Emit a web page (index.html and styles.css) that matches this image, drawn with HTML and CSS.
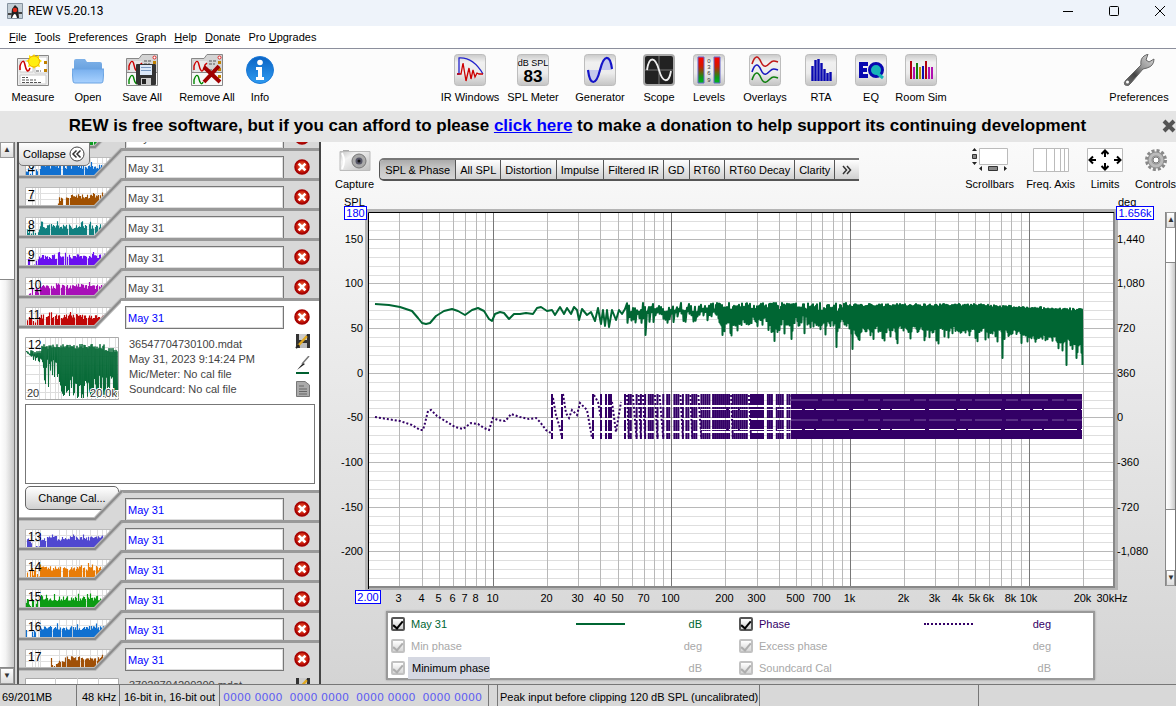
FILE: index.html
```html
<!DOCTYPE html>
<html lang="en">
<head>
<meta charset="utf-8">
<title>REW V5.20.13</title>
<link rel="stylesheet" href="styles.css">
</head>
<body>
<svg class="defs" width="0" height="0" aria-hidden="true">
  <defs>
    <linearGradient id="tile" x1="0" y1="0" x2="0" y2="1"><stop offset="0" stop-color="#c9c9c9"/><stop offset=".25" stop-color="#f0f0f0"/><stop offset=".6" stop-color="#ececec"/><stop offset="1" stop-color="#c4c4c4"/></linearGradient>
    <linearGradient id="folderBack" x1="0" y1="0" x2="0" y2="1"><stop offset="0" stop-color="#7fb2e8"/><stop offset="1" stop-color="#4f8fd6"/></linearGradient>
    <linearGradient id="folderFront" x1="0" y1="0" x2="0" y2="1"><stop offset="0" stop-color="#79b0ee"/><stop offset="1" stop-color="#a9d2ff"/></linearGradient>
    <linearGradient id="infoBlue" x1="0" y1="0" x2="0" y2="1"><stop offset="0" stop-color="#0a63c4"/><stop offset="1" stop-color="#2f9bf0"/></linearGradient>
    <linearGradient id="meter" x1="0" y1="0" x2="0" y2="1"><stop offset="0" stop-color="#f00"/><stop offset=".35" stop-color="#d21a00"/><stop offset=".8" stop-color="#0a9a1a"/><stop offset="1" stop-color="#00b820"/></linearGradient>
    <radialGradient id="redBall" cx=".5" cy=".45" r=".55"><stop offset="0" stop-color="#f08050"/><stop offset=".7" stop-color="#c81808"/><stop offset="1" stop-color="#a00000"/></radialGradient>
    <linearGradient id="steel" x1="0" y1="1" x2="1" y2="0"><stop offset="0" stop-color="#777"/><stop offset=".35" stop-color="#444"/><stop offset=".6" stop-color="#999"/><stop offset="1" stop-color="#ddd"/></linearGradient>
    <linearGradient id="cam" x1="0" y1="0" x2="1" y2="1"><stop offset="0" stop-color="#c4c4c4"/><stop offset=".3" stop-color="#f2f2f2"/><stop offset="1" stop-color="#c0c0c0"/></linearGradient>
    <symbol id="doc" viewBox="0 0 32 32">
      <path d="M.500 4.500H13L16 .500H31.500V31.500H.500V4.500Z" fill="#d4d4d4" stroke="#888"/>
      <path d="M3 7h13v11H3z" fill="#e8e8e8"/><path d="M3 16V12C5 6 7 6 8 11S11 20 13 14L14 11 16 9" fill="none" stroke="#c00" stroke-width="1.400"/>
      <path d="M18 7h8M18 10h6M18 16h5" stroke="#555" stroke-dasharray="3 1"/>
      <circle cx="28.500" cy="3.500" r="1.500" fill="#fff" stroke="#d22"/><path d="M27 7h3v3h-3zM27 14h3v3h-3z" fill="#c08000"/>
      <path d="M1 19h30v12H1z" fill="#f8f8f8"/><path d="M0 18.500h32" stroke="#888"/><path d="M3 30v-4c2-6 4-6 5-1s3 6 4 3" fill="none" stroke="#080" stroke-width="1.400"/>
      <path d="M27 21h3v3h-3z" fill="#c08000"/>
    </symbol>
    <symbol id="disk" viewBox="0 0 20 21"><path d="M0 1q0-1 1-1h18q1 0 1 1v19q0 1-1 1H2l-2-2z" fill="#333"/><path d="M4 1h12v10H4z" fill="#dbe8f8"/><path d="M5 3.500h10M5 6.500h10" stroke="#7898c0"/><path d="M5 14h10v7H5z" fill="#ccc"/><path d="M6 15h4v5H6z" fill="#222"/></symbol>
    <symbol id="smalldisk" viewBox="0 0 16 15"><path d="M1 0h14v14H3l-2-2z" fill="#333"/><path d="M4 0h8v6H4z" fill="#ccc"/><path d="M5 9h7v5H5z" fill="#bbb"/><path d="M3 12L12 2" stroke="#e0a820" stroke-width="2.500"/><path d="M1 14l3-3M12 2l1-1" stroke="#222" stroke-width="2"/></symbol>
    <symbol id="cross" viewBox="0 0 16 16"><circle cx="8" cy="8" r="7" fill="url(#redBall)" stroke="#a40000" stroke-width="1.500"/><path d="M5.500 5.500l5 5M10.500 5.500l-5 5" stroke="#fff" stroke-width="2.600" stroke-linecap="square"/></symbol>
  </defs>
</svg>

<header class="titlebar">
  <svg width="16" height="16" viewBox="0 0 16 16"><path d="M.500.500h15v15H.500z" fill="#c4ced6" stroke="#8693a0"/><path d="M4 15L5 6l3-4 3 3 1 10z" fill="#222"/><path d="M5 15q3-8 5 0z" fill="#fff"/><circle cx="8" cy="7" r="2.300" fill="#e02818"/><path d="M1 11h4M11 10h4" stroke="#444" stroke-width="2"/></svg>
  <h1>REW V5.20.13</h1>
  <div class="window-buttons">
    <button aria-label="Minimize"><svg width="12" height="12"><path d="M1 6.500h10" stroke="#000"/></svg></button>
    <button aria-label="Maximize"><svg width="12" height="12"><rect x="1.500" y="1.500" width="9" height="9" rx="1" fill="none" stroke="#000"/></svg></button>
    <button aria-label="Close"><svg width="12" height="12"><path d="M1 1l10 10M11 1L1 11" stroke="#000"/></svg></button>
  </div>
</header>
<nav class="menubar">
  <button><u>F</u>ile</button><button><u>T</u>ools</button><button><u>P</u>references</button><button><u>G</u>raph</button><button><u>H</u>elp</button><button><u>D</u>onate</button><button>Pro <u>U</u>pgrades</button>
</nav>
<div class="toolbar">
  <div class="tools file-tools">
    <button><svg width="32" height="32"><path d="M.500 4.500H13L16 1.500H31.500V31.500H.500Z" fill="#eee" stroke="#888"/><path d="M3 7h13v11H3zM18 3h12v16H18zM3 21h26v9H3z" fill="#fff" stroke="#ccc"/><path d="M3 16V12C5 6 7 6 8 11S11 20 13 14" fill="none" stroke="#c00" stroke-width="1.500"/><path d="M5 23.500h6M5 26h14M5 28.500h19M19 17h5" stroke="#555" stroke-dasharray="3 1"/><path d="M27 7h3v3h-3zM27 15h3v3h-3z" fill="#c08000"/><path d="M17 0l2 3 3-2 0 4 3 2-3 2 1 4-4-1-2 3-2-3-4 1 1-4-3-2 3-2 0-4 3 2z" fill="#ffe400"/><circle cx="17" cy="7.500" r="5.500" fill="#ffee10" stroke="#f0b000"/></svg>Measure</button>
    <button><svg width="32" height="32"><path d="M2 28V7q0-2 2-2h9l2 3h13q2 0 2 2v18z" fill="url(#folderBack)"/><path d="M0 15h32l-1 12q0 2-2 2H3q-2 0-2-2z" fill="url(#folderFront)" stroke="#6aa3e2"/></svg>Open</button>
    <button><svg width="32" height="32"><use href="#doc" width="32" height="32"/><use href="#disk" x="10" y="10" width="20" height="21"/></svg>Save All</button>
    <button><svg width="32" height="32"><use href="#doc" width="32" height="32"/><path d="M13 13l16 15M28 12L13 28" stroke="#a00000" stroke-width="4"/></svg>Remove All</button>
    <button><svg width="32" height="32"><circle cx="16" cy="16" r="13.500" fill="url(#infoBlue)" stroke="#1c7ad8"/><circle cx="16" cy="8.500" r="2.800" fill="#fff"/><path d="M12 13h6v10h2v3h-8v-3h2v-7h-2z" fill="#fff"/></svg>Info</button>
  </div>
  <div class="tools view-tools">
    <button><svg width="32" height="32"><rect class="tile" x=".500" y=".500" width="31" height="31" rx="3"/><path d="M3 20h2V4q14-1 24 16" fill="none" stroke="#22c" stroke-width="1.300"/><path d="M3 20h4l2-11 3 18 3-13 2 11 2-9 2 7 2-4 2 1h4" fill="none" stroke="#c00" stroke-width="1.300"/></svg>IR Windows</button>
    <button><svg width="32" height="32"><rect class="tile" x=".500" y=".500" width="31" height="31" rx="3"/><text x="16" y="12" class="ic-label">dB SPL</text><text x="16" y="28" class="ic-number">83</text></svg>SPL Meter</button>
    <button><svg width="32" height="32"><rect class="tile" x=".500" y=".500" width="31" height="31" rx="3"/><path d="M4 16H28Q26 4 22 4 19 5 16 16 13 28 10 28 6 27 4 16" fill="#c4c8ec"/><path d="M4 16C6 32 12 32 16 16S26 0 28 15" fill="none" stroke="#1414c8" stroke-width="2.200"/></svg>Generator</button>
    <button><svg width="32" height="32"><rect x="1" y="1" width="30" height="30" rx="3" fill="#222" stroke="#aaa" stroke-width="2"/><path d="M2 16h28M16 2v28" stroke="#777"/><path d="M4 16C6 2 12 2 16 16S26 29 28 17" fill="none" stroke="#eee" stroke-width="1.800"/></svg>Scope</button>
    <button><svg width="32" height="32"><rect class="tile" x=".500" y=".500" width="31" height="31" rx="3"/><path d="M5 3h6v26H5zM21 3h6v26h-6z" fill="url(#meter)" stroke="#66c"/><g class="ic-scale"><text x="16" y="9">0</text><text x="16" y="15">3</text><text x="16" y="21">6</text><text x="16" y="28">9</text></g></svg>Levels</button>
    <button><svg width="32" height="32"><rect class="tile" x=".500" y=".500" width="31" height="31" rx="3"/><g fill="none" stroke-width="1.600"><path d="M3 10C6 1 9 1 12 8S18 12 21 9 26 7 29 8" stroke="#c01818"/><path d="M3 18C6 9 9 9 12 16S18 20 21 17 26 15 29 16" stroke="#1818c0"/><path d="M3 26C6 17 9 17 12 24S18 28 21 25 26 23 29 24" stroke="#108010"/></g></svg>Overlays</button>
    <button><svg width="32" height="32"><rect class="tile" x=".500" y=".500" width="31" height="31" rx="3"/><path d="M7.500 27V12M10.500 27V6M13.500 27V5M16.500 27V9M19.500 27V15M22.500 27V19M25.500 27V18" stroke="#0808b0" stroke-width="2.400"/></svg>RTA</button>
    <button><svg width="32" height="32"><rect class="tile" x=".500" y=".500" width="31" height="31" rx="3"/><path d="M4 8h9v4H8v2h4v4H8v2h5v4H4z" fill="#0808b0"/><circle cx="21" cy="16" r="6.500" fill="#18b4b8" stroke="#0808b0" stroke-width="3"/><path d="M22 19l6 5" stroke="#18b4b8" stroke-width="3"/></svg>EQ</button>
    <button><svg width="32" height="32"><rect class="tile" x=".500" y=".500" width="31" height="31" rx="3"/><g stroke-width="2"><path d="M6 25V7M21 25V7" stroke="#b00010"/><path d="M9 25V13M24 25V13M27 25V13" stroke="#b010b0"/><path d="M12 25V9" stroke="#108010"/><path d="M15 25V13" stroke="#c09000"/><path d="M18 25V12" stroke="#1010b0"/></g></svg>Room Sim</button>
  </div>
  <div class="tools pref-tools">
    <button><svg width="32" height="32"><path d="M3 26L18 11Q17 5 21 2L25 0 23 6 26 8 31 5Q31 12 24 14L20 15 8 29Q6 33 2 31 0 29 3 26Z" fill="url(#steel)" stroke="#666"/><circle cx="4.500" cy="28" r="1.500" fill="#fff"/></svg>Preferences</button>
  </div>
</div>
<div class="donate">
  <p>REW is free software, but if you can afford to please <a href="#donate">click here</a> to make a donation to help support its continuing development</p>
  <button aria-label="Dismiss"><svg width="14" height="14"><path d="M2 2l10 10M12 2L2 12" stroke="#555" stroke-width="4"/></svg></button>
</div>

<main class="main">
  <div class="scroll scroll-left"><button aria-label="Scroll up">▲</button><div class="gap"></div><div class="thumb"></div><button aria-label="Scroll down">▼</button></div>
  <aside class="measurements">
    <button class="collapse">Collapse <svg width="16" height="16"><circle cx="8" cy="8" r="7" fill="#fff" stroke="#444"/><path d="M7.500 4.500L4 8l3.500 3.500M11.500 4.500L8 8l3.500 3.500" fill="none" stroke="#333" stroke-width="1.500"/></svg></button>
    <div id="upper" class="rows"></div>
    <section class="detail">
      <div class="summary">
        <svg id="preview" width="94" height="64" role="img" aria-label="Measurement 12"></svg>
        <div class="facts"><p>36547704730100.mdat</p><p>May 31, 2023 9:14:24 PM</p><p>Mic/Meter: No cal file</p><p>Soundcard: No cal file</p></div>
        <div class="actions">
          <button aria-label="Save measurement"><svg width="16" height="15"><use href="#smalldisk"/></svg></button>
          <button aria-label="Trace colour"><svg width="16" height="18"><path d="M2 14L8 7l2 1z" fill="#222"/><path d="M7 8L14 0" stroke="#777" stroke-width="1.500"/><path d="M1 17h13" stroke="#006030" stroke-width="2"/></svg></button>
          <button aria-label="Notes"><svg width="16" height="16"><path d="M1.500.500H10L14.500 4v11.500h-13z" fill="#aaa" stroke="#777"/><path d="M4 5h5M4 8h8M4 10.500h8M4 13h8" stroke="#666"/></svg></button>
        </div>
      </div>
      <textarea aria-label="Notes"></textarea>
    </section>
    <div id="lower" class="rows"></div>
    <section class="next">
      <svg width="94" height="64"><path d="M.500.500h93v63H.500z" fill="#fff" stroke="#aaa"/><path d="M30.500 0v9M52.500 0v9M73.500 0v9" stroke="#ccc"/></svg>
      <p>37028704200200.mdat</p>
      <svg width="16" height="15"><use href="#smalldisk"/></svg>
    </section>
  </aside>

  <section class="graph">
    <div class="graph-bar">
      <button class="stack"><svg width="32" height="24"><path d="M4 2h6v3H4z" fill="#aaa"/><path d="M1 3.500h30v19H1z" fill="url(#cam)" stroke="#bbb"/><path d="M3 5q4 8 0 16" fill="none" stroke="#fff" stroke-width="2"/><circle cx="20" cy="13" r="7" fill="#aaa" stroke="#777"/><circle cx="20" cy="13" r="3.500" fill="#556"/><circle cx="20" cy="13" r="1.500" fill="#111"/></svg>Capture</button>
      <nav class="tabs"><button class="active">SPL &amp; Phase</button><button>All SPL</button><button>Distortion</button><button>Impulse</button><button>Filtered IR</button><button>GD</button><button>RT60</button><button>RT60 Decay</button><button>Clarity</button><button aria-label="More"><svg width="10" height="10"><path d="M1 1l3.500 4L1 9M5 1l3.500 4L5 9" fill="none" stroke="#333" stroke-width="1.500"/></svg></button></nav>
      <div class="graph-tools">
        <button class="stack"><svg width="38" height="24"><path d="M8.500.500h28v16h-28z" fill="#fff" stroke="#bbb"/><path d="M1 3l2.500-3L6 3zM1 14l2.500 3L6 14zM11 18v5l-3-2.500zM33 18v5l3-2.500z" fill="#222"/><path d="M1.500 6.500h4v4h-4zM17.500 18.500h9v4h-9z" fill="#888" stroke="#333"/></svg>Scrollbars</button>
        <button class="stack"><svg width="36" height="24"><path d="M.500.500h35v23H.500z" fill="#fff" stroke="#bbb"/><path d="M13.500 0v24M21.500 0v24M27.500 0v24M31.500 0v24" stroke="#bbb"/></svg>Freq. Axis</button>
        <button class="stack"><svg width="36" height="24"><path d="M.500.500h35v23H.500z" fill="#fff" stroke="#bbb"/><path d="M18 3v6M18 21v-6M3 12h6M33 12h-6M14.500 6L18 2.500 21.500 6M14.500 18l3.500 3.500 3.500-3.500M6 8.500L2.500 12 6 15.500M30 8.500l3.500 3.500-3.500 3.500" fill="none" stroke="#000" stroke-width="2"/></svg>Limits</button>
        <button class="stack"><svg width="24" height="24"><circle cx="12" cy="12" r="9.500" fill="none" stroke="#888" stroke-width="3" stroke-dasharray="3 2"/><circle cx="12" cy="12" r="6" fill="#ccc" stroke="#8c8c8c" stroke-width="5"/><circle cx="12" cy="12" r="6" fill="none" stroke="#bbb" stroke-width="3"/><circle cx="12" cy="12" r="3" fill="#fff" stroke="#777"/></svg>Controls</button>
      </div>
    </div>
    <div class="plot-row">
      <div class="plot" id="plot">
        <svg id="chart" role="img" aria-label="SPL and phase against frequency"></svg>
        <input class="limit spl-top" aria-label="SPL upper limit" value="180">
        <input class="limit deg-top" aria-label="Phase upper limit" value="1.656k">
        <input class="limit freq-low" aria-label="Lowest frequency" value="2.00">
      </div>
      <div class="scroll scroll-right"><button aria-label="Scroll up">▲</button><div class="gap"></div><div class="thumb"></div><div class="gap"></div><button aria-label="Scroll down">▼</button></div>
    </div>
    <div class="legend">
      <div class="key green"><input type="checkbox" id="k1" checked><label for="k1">May 31</label><i></i><span>dB</span></div>
      <div class="key violet"><input type="checkbox" id="k2" checked><label for="k2">Phase</label><i></i><span>deg</span></div>
      <div class="key off"><input type="checkbox" id="k3" checked disabled><label for="k3">Min phase</label><span>deg</span></div>
      <div class="key off"><input type="checkbox" id="k4" checked disabled><label for="k4">Excess phase</label><span>deg</span></div>
      <div class="key off"><input type="checkbox" id="k5" checked disabled><label for="k5" class="hint">Minimum phase</label><span>dB</span></div>
      <div class="key off"><input type="checkbox" id="k6" checked disabled><label for="k6">Soundcard Cal</label><span>dB</span></div>
    </div>
  </section>
</main>
<footer class="status">
  <span class="memory">69/201MB</span><span class="rate">48 kHz</span><span class="bits">16-bit in, 16-bit out</span><span class="inputs">0000 0000&nbsp; 0000 0000&nbsp; 0000 0000&nbsp; 0000 0000</span><span class="spacer"></span><span class="peak">Peak input before clipping 120 dB SPL (uncalibrated)</span><span class="message"></span><span class="last"></span>
</footer>
<script src="app.js"></script>
</body>
</html>
```
FILE: styles.css
```css
* { box-sizing: border-box; }
body { margin: 0; height: 100vh; display: flex; flex-direction: column; overflow: hidden; font: 11px/14px "Liberation Sans", Arial, sans-serif; color: #000; background: #d6d6d6; }
button { font: inherit; color: inherit; border: 0; padding: 0; margin: 0; background: none; }
p, h1 { margin: 0; }
svg { display: block; flex: none; }
.defs { position: absolute; }

.titlebar { flex: none; height: 26px; display: flex; align-items: center; gap: 5px; padding: 0 10px 4px 7px; background: #eef3fa; }
.titlebar h1 { font: 12px/16px Roboto, sans-serif; }
.window-buttons { margin-left: auto; display: flex; gap: 34px; }
.menubar { flex: none; height: 23px; display: flex; align-items: center; gap: 8px; padding: 0 9px; background: #fff; border-bottom: 1px solid #8c8f9c; }
.toolbar { flex: none; height: 62px; display: flex; justify-content: space-between; background: #fcfcfc; }
.tools { display: grid; }
.tools button { display: flex; flex-direction: column; align-items: center; gap: 4px; padding-top: 5px; white-space: nowrap; }
.file-tools { grid-template-columns: 66px 44px 64px 66px 40px; padding-right: 4px; }
.view-tools { grid-template-columns: 60px 66px 68px 50px 50px 62px 50px 50px 50px; }
.pref-tools { grid-template-columns: 74px; }
.tile { fill: url(#tile); stroke: #bdbdbd; }
.ic-label { font-size: 9px; text-anchor: middle; }
.ic-number { font-size: 17px; font-weight: bold; text-anchor: middle; }
.ic-scale { font-size: 6px; text-anchor: middle; fill: #333; }
.donate { flex: none; height: 31px; display: flex; align-items: center; padding-bottom: 1px; background: #e5e5e5; }
.donate p { flex: 1; padding-right: 7px; text-align: center; font: bold 17px/20px "Liberation Sans", Arial, sans-serif; white-space: nowrap; }
.donate a { color: #00f; }

.main { flex: 1; min-height: 0; display: flex; background: #d6d6d6; }
.scroll { flex: none; display: flex; flex-direction: column; border-right: 1px solid #777; }
.scroll button { flex: none; height: 16px; font-size: 8px; line-height: 12px; color: #333; background: linear-gradient(#fff, #ddd); border: 1px solid #999; }
.scroll .gap { background: #fff; }
.scroll .thumb { flex: 1; background: linear-gradient(90deg, #fff, #f4f4f4 40%, #c8c8c8); border-top: 1px solid #888; border-bottom: 1px solid #888; }
.scroll-left { width: 15px; }
.scroll-left .gap { height: 121px; }
.scroll-right { width: 11px; margin: 16px 0 23px; border-left: 1px solid #888; }
.scroll-right button { overflow: hidden; }
.scroll-right .gap { height: 34px; }
.scroll-right .thumb + .gap { height: 60px; }

.measurements { position: relative; flex: none; width: 304px; margin-left: 2px; overflow: hidden; background: #d8d8d8; border-left: 2px solid #555; border-right: 2px solid #444; }
.collapse { position: absolute; z-index: 2; left: -1px; top: 0; width: 72px; height: 24px; display: flex; align-items: center; justify-content: space-between; padding: 0 4px; border: 1px solid #777; border-radius: 0 0 5px 5px; background: linear-gradient(#fff, #d8d8d8); }
.row { height: 30px; display: flex; }
#upper .row:first-child { margin-top: -24px; }
.row .edge { overflow: visible; width: 102px; height: 30px; }
.row .body { flex: 1; display: flex; align-items: flex-start; gap: 10px; padding: 5px 10px 0 4px; border-top: 3px solid #999; }
.row input { flex: none; width: 159px; height: 23px; padding: 1px 2px 0; border: 1px solid #777; box-shadow: inset 0 0 0 1px #ddd; font: inherit; color: #444; background: #fff; }
.row.new input { color: #00f; }
.row .body button { margin-top: 3px; }
.row.white .body { background: #fff; }
.num { font-size: 12px; }
.detail { height: 162px; padding: 9px 4px 0 6px; background: #fff; }
.summary { display: flex; height: 67px; }
.facts { flex: 1; padding-left: 10px; color: #444; line-height: 15px; }
.actions { display: flex; flex-direction: column; gap: 7px; margin-top: -3px; padding-right: 4px; }
.detail textarea { display: block; width: 100%; height: 80px; border: 1px solid #777; resize: none; }
.changer { flex: none; width: 102px; display: flex; align-items: flex-start; background: #fff; position: relative; }
.change { flex: none; width: 94px; margin: -4px 0 0 6px; height: 24px; border: 1px solid #666; border-radius: 5px; background: linear-gradient(#fff, #d0d0d0); }
.changer .edge { position: absolute; left: 0; top: 0; }
.next { display: flex; gap: 10px; padding: 8px 8px 0 6px; color: #444; }
.next p { flex: 1; }

.graph { flex: 1; min-width: 0; display: flex; flex-direction: column; background: linear-gradient(#fafafa, #f0f0f0 25%, #d4d4d4); }
.graph-bar { flex: none; height: 54px; display: flex; align-items: flex-start; padding: 6px 0 0 14px; }
.stack { display: flex; flex-direction: column; align-items: center; gap: 5px; white-space: nowrap; }
.tabs { display: flex; margin: 10px 0 0 5px; height: 23px; border-top: 2px solid #777; border-bottom: 2px solid #555; border-left: 1px solid #555; border-radius: 5px 0 0 5px; overflow: hidden; background: linear-gradient(#fff, #d0d0d0); }
.tabs button { padding: 0 4px; border-right: 1px solid #555; white-space: nowrap; }
.tabs .active { padding: 0 5px; background: linear-gradient(#aaa, #c4c4c4 40%, #d4d4d4); }
.tabs button:last-child { padding: 0 7px; border-right: 0; }
.graph-tools { margin-left: auto; display: flex; gap: 12px; }
.graph-tools .stack:nth-child(3) { width: 36px; }
.plot-row { flex: 1; min-height: 0; display: flex; }
.plot { position: relative; flex: 1; min-width: 0; overflow: hidden; }
#chart { position: absolute; left: 0; top: 0; width: 100%; height: 100%; font-size: 11px; }
.limit { position: absolute; height: 14px; padding: 0; border: 1px solid #00f; background: #fff; color: #00f; font: 11px/12px "Liberation Sans", Arial, sans-serif; text-align: center; }
.spl-top { left: 23px; top: 10px; width: 23px; }
.deg-top { right: 11px; top: 10px; width: 38px; }
.freq-low { left: 34px; bottom: 5px; width: 26px; }
.legend { flex: none; display: grid; grid-template-columns: 348px 1fr; grid-auto-rows: 22px; margin: 2px 81px 4px 65px; height: 69px; padding: 0 42px 0 3px; background: #fff; border: 2px solid #999; box-shadow: 0 0 2px #999; }
.key { display: flex; align-items: center; padding-right: 37px; }
.key:nth-child(even) { padding-right: 0; }
.key input { appearance: none; display: grid; place-items: center; flex: none; width: 14px; height: 14px; margin: 0; border: 2px solid #555; border-radius: 2px; background: linear-gradient(#fff, #ccc); }
.key input::before { content: ""; width: 4px; height: 8px; border: solid #000; border-width: 0 2px 2px 0; rotate: 40deg; }
.key label { flex: none; width: 171px; padding-left: 6px; }
.key i { width: 49px; height: 0; border-top: 2px solid; }
.key span { margin-left: auto; }
.green { color: #006633; }
.violet { color: #330066; }
.violet i { border-top-style: dotted; }
.off { color: #a8a8a8; }
.off input { border-color: #b4b4b4; opacity: .8; }
.off input::before { border-color: #999; }
.key .hint { width: 82px; height: 22px; margin-left: 3px; padding: 4px; background: #d5d8e2; color: #000; white-space: nowrap; }

.status { flex: none; height: 22px; display: flex; border-top: 1px solid #777; background: #d8d8d8; line-height: 25px; white-space: nowrap; }
.status span { border-right: 1px solid #777; padding-left: 5px; }
.status .memory { width: 77px; padding-left: 2px; }
.status .rate { width: 43px; }
.status .bits { width: 100px; padding-left: 4px; }
.status .inputs { width: 269px; padding-left: 3px; font: 11px/25px "DejaVu Sans", sans-serif; color: #5f5ff0; }
.status .spacer { width: 9px; }
.status .peak { width: 262px; padding-left: 2px; }
.status .message { width: 219px; }
.status .last { flex: 1; border: 0; }
```
FILE: app.js
```js
let seed = 7;
const rnd = () => (seed = (seed * 16807) % 2147483647) / 2147483647;
const pick = (a, b) => a + (b - a) * rnd();

const upper = [
  { n: '5', color: '#0a9a20', from: 0 }, { n: '6', color: '#1070d0', from: 0 },
  { n: '7', color: '#a05000', from: 30 }, { n: '8', color: '#108080', from: 0 },
  { n: '9', color: '#6a10f0', from: 0 }, { n: '10', color: '#a810b8', from: 0 },
  { n: '11', color: '#c00808', from: 0, isNew: true, white: true }
];
const lower = [
  { change: true, isNew: true }, { n: '13', color: '#5048d0', from: 0, isNew: true },
  { n: '14', color: '#e87c08', from: 0, isNew: true }, { n: '15', color: '#0c9c14', from: 0, isNew: true },
  { n: '16', color: '#1070d0', from: 0, isNew: true }, { n: '17', color: '#a05008', from: 25, isNew: true }
];
const gridX = [6, 9, 12, 14, 33, 40, 46, 50, 53, 64, 71, 76, 80, 83];

function edge(row) {
  const fill = row.white ? '#fff' : '#d8d8d8';
  let s = '';
  if (!row.change) {
    s += '<path d="M6.500 9.500H96V28H6.500Z" fill="#fff" stroke="#bbb"/>';
    gridX.forEach(x => { s += `<path d="M${x + 7.5} 10v18" stroke="#ddd"/>`; });
    s += '<path d="M7 15.500h80M7 21.500h80" stroke="#e0e0e0"/>';
    let d = '';
    for (let x = row.from; x < 79; x++) {
      const low = x - row.from < 14;
      const h = low ? pick(1, 11) : pick(8, 13) + (rnd() > .9 ? 3 : 0);
      if (rnd() > (low ? .35 : .05)) d += `M${x + 7.5} 29v${-h.toFixed(1)}`;
    }
    s += `<path d="${d}" stroke="${row.color}" stroke-width="1.2"/>`;
  }
  s += `<path d="M76 30L103 1V30Z" fill="${fill}"/>`;
  s += '<path d="M0 29H76L103 1" fill="none" stroke="#bbb" stroke-width="4"/><path d="M0 29H76L103 1" fill="none" stroke="#8c8c8c" stroke-width="2"/>';
  if (!row.change) {
    const mark = +row.n < 11 ? `<tspan text-decoration="underline">${row.n.slice(-1)}</tspan>` : row.n.slice(-1);
    s += `<text class="num" x="9" y="21">${row.n.slice(0, -1)}${mark}</text>`;
  }
  return `<svg class="edge" width="102" height="30">${s}</svg>`;
}

function rows(id, list) {
  document.getElementById(id).innerHTML = list.map(row => {
    const left = row.change ? `<div class="changer"><button class="change">Change Cal...</button>${edge(row)}</div>` : edge(row);
    return `<div class="row${row.isNew ? ' new' : ''}${row.white ? ' white' : ''}">${left}<div class="body"><input aria-label="Measurement name" value="May 31"><button aria-label="Delete"><svg width="16" height="16"><use href="#cross"/></svg></button></div></div>`;
  }).join('');
}
rows('upper', upper);
rows('lower', lower);

function preview() {
  let s = '<path d="M.500.500h93v62H.500z" fill="#fff" stroke="#aaa"/>';
  [14, 20, 25, 30, 33, 36, 50, 57, 62, 66, 70, 84, 90].forEach(x => { s += `<path d="M${x}.5 1v61" stroke="#ddd"/>`; });
  for (let y = 10; y < 62; y += 9) s += `<path d="M1 ${y}.5h92" stroke="#ddd"/>`;
  let d = 'M1 15';
  for (let x = 2; x < 93; x += 1) {
    const top = x < 17 ? pick(13, 17) : x < 80 ? pick(7, 12) : pick(11, 17);
    const reach = x < 17 ? 15 + x * pick(.4, 1.2) : x < 36 ? pick(22, 50) : pick(38, 64);
    d += `L${x} ${top.toFixed(1)}L${x + .5} ${Math.min(reach, 61).toFixed(1)}`;
  }
  s += `<path d="${d}" fill="none" stroke="#086b38" stroke-width="1"/>`;
  s += '<text class="num" x="3" y="12">12</text><text x="2" y="60" fill="#333">20</text><text x="92" y="60" text-anchor="end" fill="#333" stroke="#fff" stroke-width="2" paint-order="stroke">20.0k</text>';
  document.getElementById('preview').innerHTML = s;
}
preview();

const splStart = [[6,92],[20,93],[31,95],[43,99],[49,106],[53,111],[57,112],[61,111],[67,104],[75,99],[83,97],[89,99],[96,103],[103,98],[109,96],[115,99],[120,107],[123,109],[126,102],[131,100],[135,101],[140,107],[145,102],[151,102],[157,101],[164,102],[168,96],[172,95],[178,99],[183,98],[186,103],[191,95],[195,102],[198,96],[202,102],[205,95],[208,98],[210,108],[213,97],[218,103],[222,100],[226,109],[229,96],[232,112],[234,98],[236,114],[238,98],[240,115],[243,98],[247,108],[250,98],[253,102],[256,97]];
const deep = { 276: 123, 287: 117, 303: 120, 339: 120, 353: 123, 361: 121, 405: 129, 422: 127, 467: 135, 483: 137, 633: 146, 697: 153, 707: 146 };
const phaseStart = [[6,205],[18,207],[31,209],[43,213],[51,218],[54,218],[56,211],[59,199],[62,198],[68,204],[78,210],[86,215],[94,217],[98,214],[102,211],[109,212],[115,216],[120,218],[124,206],[129,208],[136,209],[139,206],[142,202],[151,205],[160,207],[167,206],[171,210],[177,218],[182,221]];

function draw() {
  seed = 4242;
  const box = document.getElementById('plot');
  const W = box.clientWidth, H = box.clientHeight;
  const L = 47, T = 16, R = W - 51, B = H - 22;
  const w = R - L, h = B - T;
  const X = x => (L + 1 + x * (w - 1) / 745).toFixed(1);
  const Y = y => (T + y * h / 375).toFixed(1);
  const fx = f => Math.round(L + w * Math.log10(f / 2) / Math.log10(15000)) + .5;
  const vy = v => Math.round(T + h * (180 - v) / 420) + .5;
  let s = `<rect x="${L - 3}" y="${T - 3}" width="${w + 7}" height="${h + 6}" fill="#b4b4b4"/><rect x="${L}" y="${T}" width="${w}" height="${h}" fill="#fff"/>`;
  for (let v = 170; v > -240; v -= 10) s += `<path d="M${L} ${vy(v)}H${R}" stroke="${v % 50 ? '#dedede' : '#b8b8b8'}"/>`;
  for (let k = 1; k < 30000; k *= 10) for (let m = 1; m < 10; m++) {
    const f = k * m;
    if (f > 2 && f < 30000) s += `<path d="M${fx(f)} ${T}V${B}" stroke="${m === 1 ? '#777' : '#b8b8b8'}"/>`;
  }
  s += `<path d="M${L} ${B}H${R}V${T}" fill="none" stroke="#888" stroke-width="2"/><path d="M${L + .5} ${B + 2}V${T + .5}H${R}" fill="none" stroke="#000"/>`;

  let d = 'M' + splStart.map(p => X(p[0]) + ' ' + Y(p[1])).join('L');
  for (let x = 258; x <= 713; x += x < 345 ? 2 : 1) {
    const t = (x - 258) / 455;
    const top = x > 620 ? 94 + (x - 620) * .04 + pick(-1, 2) : x > 480 ? pick(92, 95) : pick(91, 100);
    let low;
    if (x < 350) low = pick(97, 111);
    else if (x < 480) low = pick(102, 114) + (rnd() > .8 ? pick(4, 12) : 0);
    else low = pick(109, 117) + t * 6 + (rnd() > .8 ? pick(4, 13) : 0);
    if (x > 630) low += (x - 630) * .13;
    if (x > 685 && rnd() > .6) low += 7;
    const hit = Object.keys(deep).find(k => Math.abs(k - x) < 1);
    if (hit) low = deep[hit];
    d += `L${X(x)} ${Y(top)}L${X(x + .5)} ${Y(low)}`;
  }
  s += `<path d="${d}" fill="none" stroke="#006633" stroke-width="2" stroke-linejoin="round"/>`;

  const dots = pts => `<path d="M${pts.map(p => X(p[0]) + ' ' + Y(p[1])).join('L')}" fill="none" stroke="#330066" stroke-width="2" stroke-dasharray="2 2"/>`;
  const bar = x => `<path d="M${X(x)} ${Y(182)}V${Y(227)}" stroke="#330066" stroke-width="2" stroke-dasharray="11 2"/>`;
  s += dots(phaseStart) + bar(183) + dots([[184,186],[187,203],[191,216],[193,226]]) + bar(193);
  s += dots([[194,182],[197,201],[200,206],[203,198],[208,203],[211,191],[218,198],[223,226]]) + bar(224) + dots([[225,183],[229,190],[232,206]]);
  [232,237,240,242].forEach(x => { s += bar(x); });
  s += dots([[243,190],[247,220],[252,190]]);
  for (let x = 256; x < 422;) {
    const run = x < 330 ? Math.ceil(pick(0, 3)) : Math.ceil(pick(2, 9));
    for (let i = 0; i < run && x < 422; i++, x += 2) s += bar(x);
    const gap = pick(1.5, x < 320 ? 4 : 3.5);
    if (rnd() > .4) s += dots([[x, 183], [x + gap, 226]]);
    x += gap;
  }
  s += `<rect x="${X(422)}" y="${Y(182)}" width="${X(713) - X(422)}" height="${Y(227) - Y(182)}" fill="#330066"/>`;
  s += `<path d="M${X(332)} ${Y(197.5)}H${X(713)}M${X(332)} ${Y(217.5)}H${X(713)}" stroke="#fff" stroke-dasharray="25 3 9 2 33 4"/>`;
  s += `<path d="M${X(422)} ${Y(188)}H${X(713)}M${X(422)} ${Y(208)}H${X(713)}" stroke="#7c5aa0" stroke-dasharray="27 4 12 3"/>`;

  for (let v = 150; v >= -200; v -= 50) {
    const y = Math.floor(vy(v)) + 4;
    s += `<text x="${L - 5}" y="${y}" text-anchor="end">${v}</text><text x="${R + 3}" y="${y}">${((v + 50) * 7.2).toLocaleString('en-US', { maximumFractionDigits: 0 })}</text>`;
  }
  s += `<text x="23" y="10">SPL</text><text x="${R + 4}" y="10">deg</text>`;
  [3,4,5,6,7,8,10,20,30,40,50,70,100,200,300,500,700,1000,2000,3000,4000,5000,6000,8000,10000,20000].forEach(f => {
    s += `<text x="${fx(f) - 1}" y="${B + 15}" text-anchor="middle">${f < 1000 ? f : f / 1000 + 'k'}</text>`;
  });
  s += `<text x="${R - 2}" y="${B + 15}" text-anchor="middle">30kHz</text>`;
  document.getElementById('chart').innerHTML = s;
}
draw();
window.addEventListener('resize', draw);
```
